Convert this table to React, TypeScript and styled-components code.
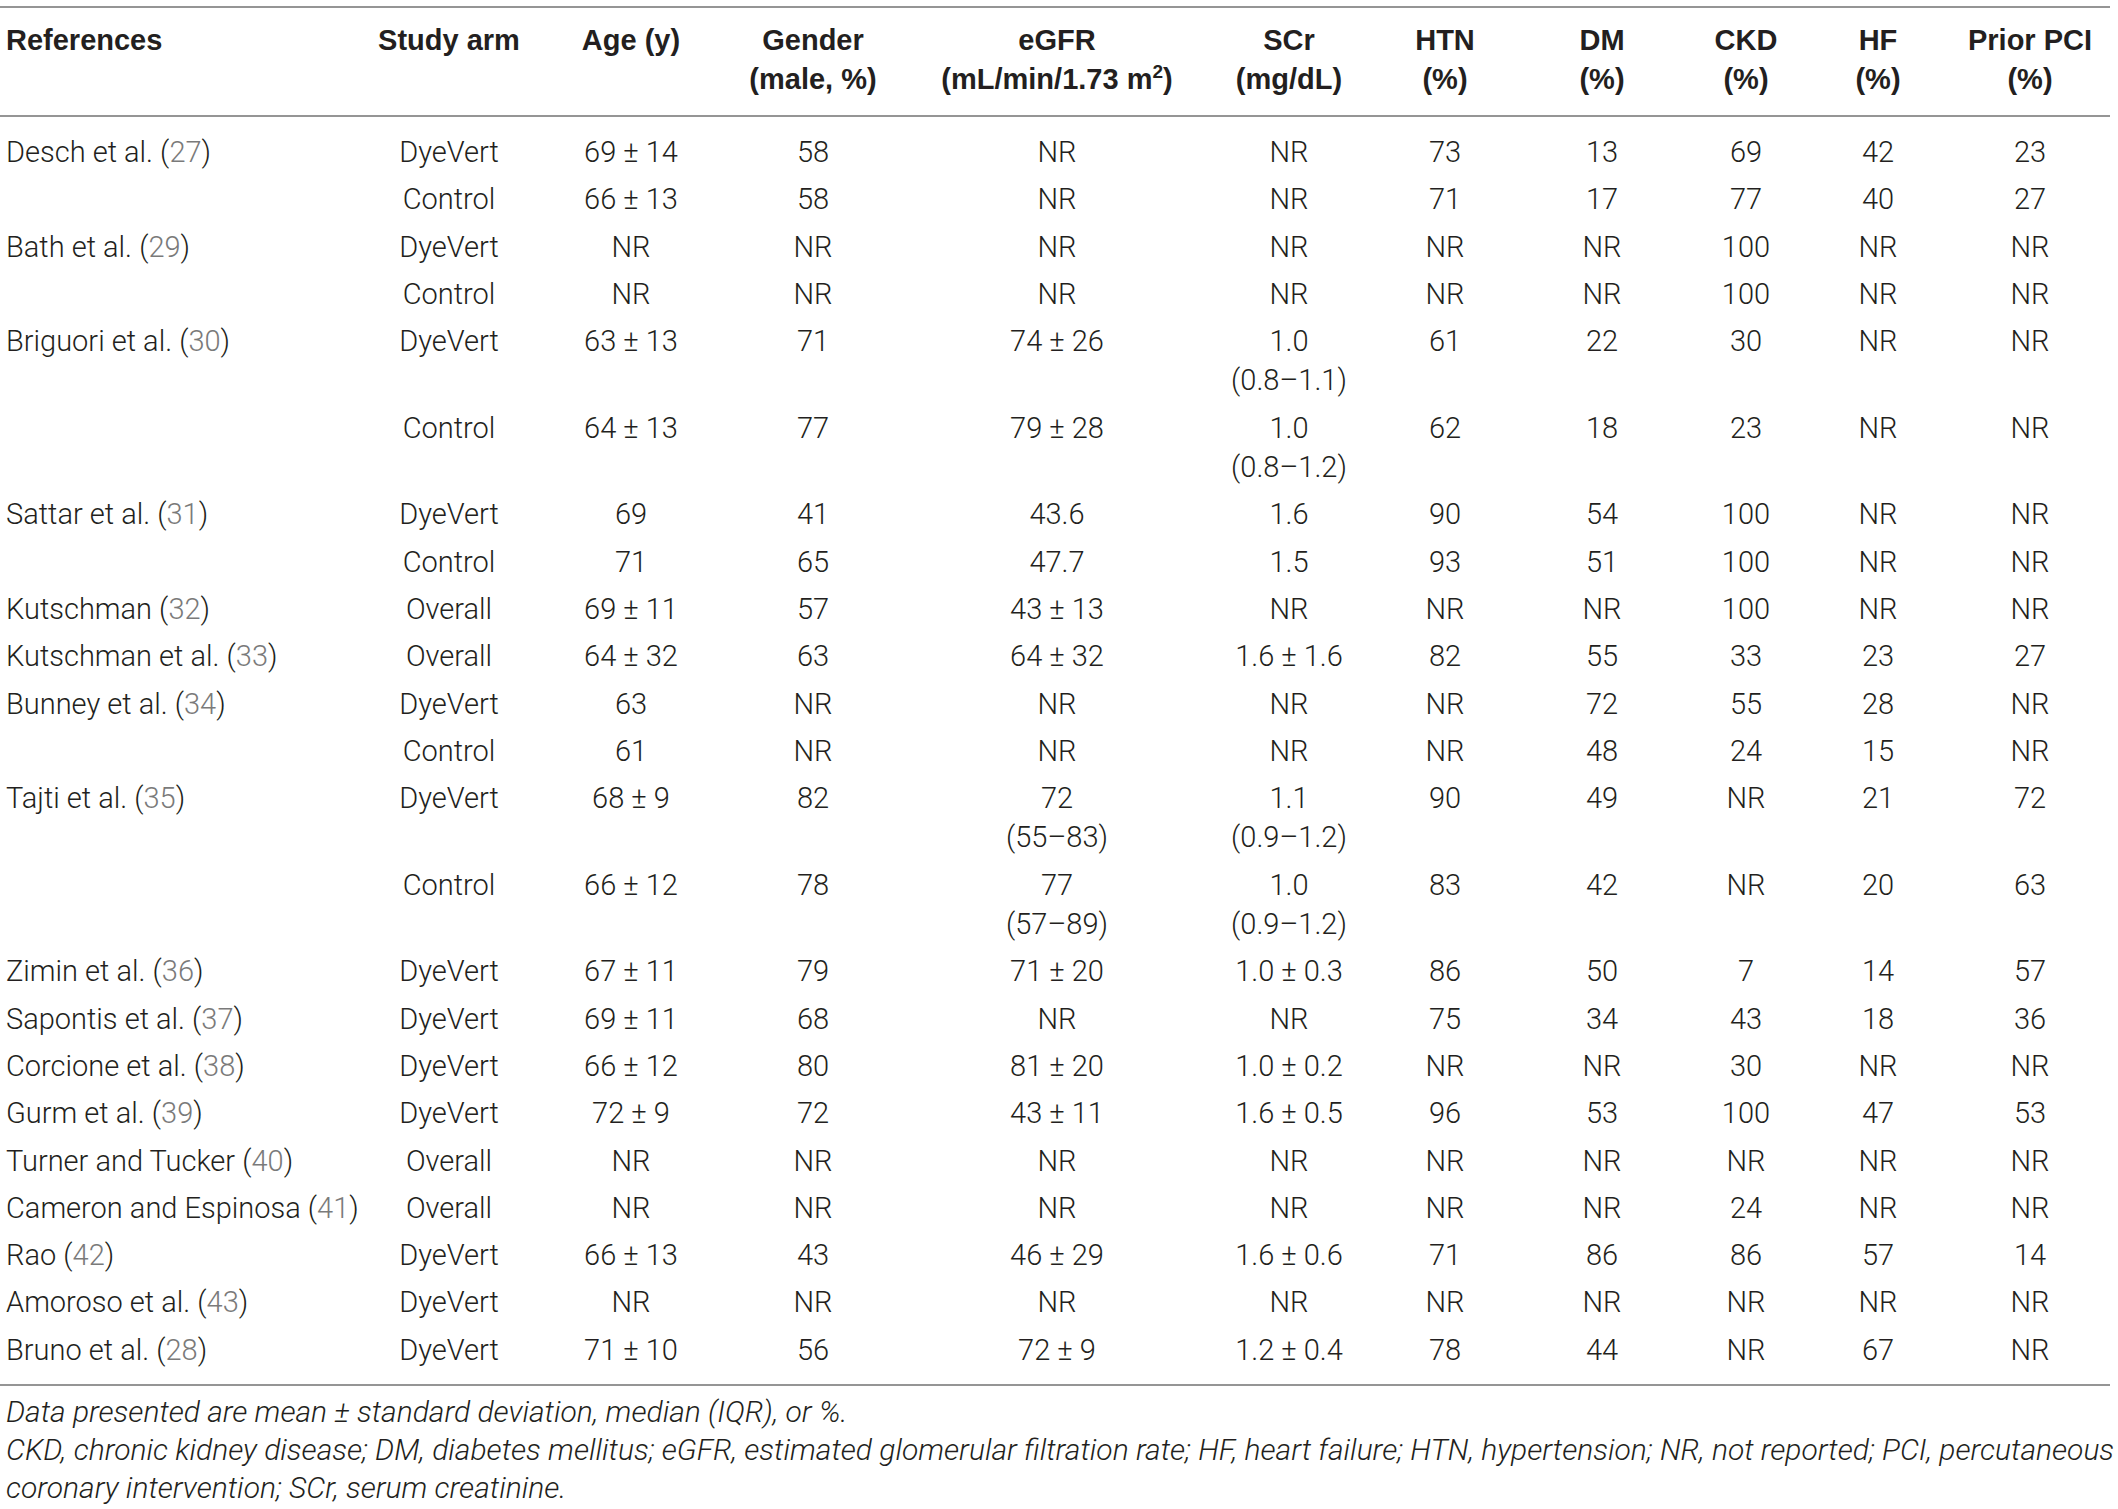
import React from "react";
import styled, { createGlobalStyle } from "styled-components";

const GlobalStyle = createGlobalStyle`
  html, body { margin: 0; padding: 0; background: #ffffff; }
  body { font-family: "Liberation Sans", Arial, sans-serif; color: #231f20; }
`;

const Page = styled.div`
  width: 2110px;
  padding-top: 6px;
`;

const DataTable = styled.table`
  width: 2110px;
  table-layout: fixed;
  border-collapse: collapse;
  border-top: 2px solid #959595;
  border-bottom: 2px solid #959595;
`;

const HeadRow = styled.tr`
  border-bottom: 2px solid #959595;
`;

const HeadCell = styled.th<{ $align: "left" | "center"; $shift?: number }>`
  font-family: "Liberation Sans", Arial, sans-serif;
  font-weight: 700;
  font-size: 29px;
  line-height: 39px;
  color: #231f20;
  text-align: ${(p) => p.$align};
  vertical-align: top;
  padding: 13px 0 16px ${(p) => p.$shift ?? 0}px;
  white-space: nowrap;
  sup {
    font-size: 19px;
    line-height: 0;
    vertical-align: 11px;
  }
`;

const BodyRow = styled.tr<{ $first?: boolean; $last?: boolean }>`
  td {
    padding-top: ${(p) => (p.$first ? 16 : 4)}px;
    padding-bottom: ${(p) => (p.$last ? 14 : 4)}px;
  }
`;

const Cell = styled.td<{ $align: "left" | "center"; $shift?: number }>`
  font-family: Roboto, "Liberation Sans", Arial, sans-serif;
  font-weight: 300;
  font-size: 29px;
  line-height: 39.3px;
  color: #231f20;
  text-align: ${(p) => p.$align};
  vertical-align: top;
  padding-left: ${(p) => p.$shift ?? 0}px;
  padding-right: 0;
  white-space: nowrap;
`;

const RefNum = styled.span`
  color: #7a7a7a;
`;

const Footnotes = styled.div`
  padding-top: 7px;
  padding-left: 6px;
`;

const Note = styled.p`
  margin: 0;
  font-family: Roboto, "Liberation Sans", Arial, sans-serif;
  font-weight: 300;
  font-style: italic;
  font-size: 30px;
  line-height: 38px;
  color: #231f20;
  white-space: nowrap;
`;

const widths = [370, 158, 206, 158, 330, 134, 178, 136, 152, 112, 176];
const shifts = [6, 0, 0, 0, 0, 0, 0, 0, 0, 0, 16];

type Row = {
  author?: string;
  ref?: string;
  cells: string[];
};

const rows: Row[] = [
  { author: "Desch et al.", ref: "27", cells: ["DyeVert", "69 ± 14", "58", "NR", "NR", "73", "13", "69", "42", "23"] },
  { cells: ["Control", "66 ± 13", "58", "NR", "NR", "71", "17", "77", "40", "27"] },
  { author: "Bath et al.", ref: "29", cells: ["DyeVert", "NR", "NR", "NR", "NR", "NR", "NR", "100", "NR", "NR"] },
  { cells: ["Control", "NR", "NR", "NR", "NR", "NR", "NR", "100", "NR", "NR"] },
  { author: "Briguori et al.", ref: "30", cells: ["DyeVert", "63 ± 13", "71", "74 ± 26", "1.0\n(0.8–1.1)", "61", "22", "30", "NR", "NR"] },
  { cells: ["Control", "64 ± 13", "77", "79 ± 28", "1.0\n(0.8–1.2)", "62", "18", "23", "NR", "NR"] },
  { author: "Sattar et al.", ref: "31", cells: ["DyeVert", "69", "41", "43.6", "1.6", "90", "54", "100", "NR", "NR"] },
  { cells: ["Control", "71", "65", "47.7", "1.5", "93", "51", "100", "NR", "NR"] },
  { author: "Kutschman", ref: "32", cells: ["Overall", "69 ± 11", "57", "43 ± 13", "NR", "NR", "NR", "100", "NR", "NR"] },
  { author: "Kutschman et al.", ref: "33", cells: ["Overall", "64 ± 32", "63", "64 ± 32", "1.6 ± 1.6", "82", "55", "33", "23", "27"] },
  { author: "Bunney et al.", ref: "34", cells: ["DyeVert", "63", "NR", "NR", "NR", "NR", "72", "55", "28", "NR"] },
  { cells: ["Control", "61", "NR", "NR", "NR", "NR", "48", "24", "15", "NR"] },
  { author: "Tajti et al.", ref: "35", cells: ["DyeVert", "68 ± 9", "82", "72\n(55–83)", "1.1\n(0.9–1.2)", "90", "49", "NR", "21", "72"] },
  { cells: ["Control", "66 ± 12", "78", "77\n(57–89)", "1.0\n(0.9–1.2)", "83", "42", "NR", "20", "63"] },
  { author: "Zimin et al.", ref: "36", cells: ["DyeVert", "67 ± 11", "79", "71 ± 20", "1.0 ± 0.3", "86", "50", "7", "14", "57"] },
  { author: "Sapontis et al.", ref: "37", cells: ["DyeVert", "69 ± 11", "68", "NR", "NR", "75", "34", "43", "18", "36"] },
  { author: "Corcione et al.", ref: "38", cells: ["DyeVert", "66 ± 12", "80", "81 ± 20", "1.0 ± 0.2", "NR", "NR", "30", "NR", "NR"] },
  { author: "Gurm et al.", ref: "39", cells: ["DyeVert", "72 ± 9", "72", "43 ± 11", "1.6 ± 0.5", "96", "53", "100", "47", "53"] },
  { author: "Turner and Tucker", ref: "40", cells: ["Overall", "NR", "NR", "NR", "NR", "NR", "NR", "NR", "NR", "NR"] },
  { author: "Cameron and Espinosa", ref: "41", cells: ["Overall", "NR", "NR", "NR", "NR", "NR", "NR", "24", "NR", "NR"] },
  { author: "Rao", ref: "42", cells: ["DyeVert", "66 ± 13", "43", "46 ± 29", "1.6 ± 0.6", "71", "86", "86", "57", "14"] },
  { author: "Amoroso et al.", ref: "43", cells: ["DyeVert", "NR", "NR", "NR", "NR", "NR", "NR", "NR", "NR", "NR"] },
  { author: "Bruno et al.", ref: "28", cells: ["DyeVert", "71 ± 10", "56", "72 ± 9", "1.2 ± 0.4", "78", "44", "NR", "67", "NR"] },
];

const renderLines = (text: string) => {
  const parts = text.split("\n");
  return parts.map((t, i) => (
    <React.Fragment key={i}>
      {i > 0 && <br />}
      {t}
    </React.Fragment>
  ));
};

export default function App() {
  return (
    <>
      <GlobalStyle />
      <Page>
        <DataTable>
          <colgroup>
            {widths.map((w, i) => (
              <col key={i} style={{ width: w }} />
            ))}
          </colgroup>
          <thead>
            <HeadRow>
              <HeadCell $align="left" $shift={6}>References</HeadCell>
              <HeadCell $align="center">Study arm</HeadCell>
              <HeadCell $align="center">Age (y)</HeadCell>
              <HeadCell $align="center">Gender<br />(male, %)</HeadCell>
              <HeadCell $align="center">eGFR<br />(mL/min/1.73 m<sup>2</sup>)</HeadCell>
              <HeadCell $align="center">SCr<br />(mg/dL)</HeadCell>
              <HeadCell $align="center">HTN<br />(%)</HeadCell>
              <HeadCell $align="center">DM<br />(%)</HeadCell>
              <HeadCell $align="center">CKD<br />(%)</HeadCell>
              <HeadCell $align="center">HF<br />(%)</HeadCell>
              <HeadCell $align="center" $shift={16}>Prior PCI<br />(%)</HeadCell>
            </HeadRow>
          </thead>
          <tbody>
            {rows.map((r, ri) => (
              <BodyRow key={ri} $first={ri === 0} $last={ri === rows.length - 1}>
                <Cell $align="left" $shift={shifts[0]}>
                  {r.author && (
                    <>
                      {r.author} (<RefNum>{r.ref}</RefNum>)
                    </>
                  )}
                </Cell>
                {r.cells.map((c, ci) => (
                  <Cell key={ci} $align="center" $shift={shifts[ci + 1]}>
                    {renderLines(c)}
                  </Cell>
                ))}
              </BodyRow>
            ))}
          </tbody>
        </DataTable>
        <Footnotes>
          <Note>Data presented are mean ± standard deviation, median (IQR), or %.</Note>
          <Note>
            CKD, chronic kidney disease; DM, diabetes mellitus; eGFR, estimated glomerular filtration rate; HF, heart failure; HTN, hypertension; NR, not reported; PCI, percutaneous
          </Note>
          <Note>coronary intervention; SCr, serum creatinine.</Note>
        </Footnotes>
      </Page>
    </>
  );
}
